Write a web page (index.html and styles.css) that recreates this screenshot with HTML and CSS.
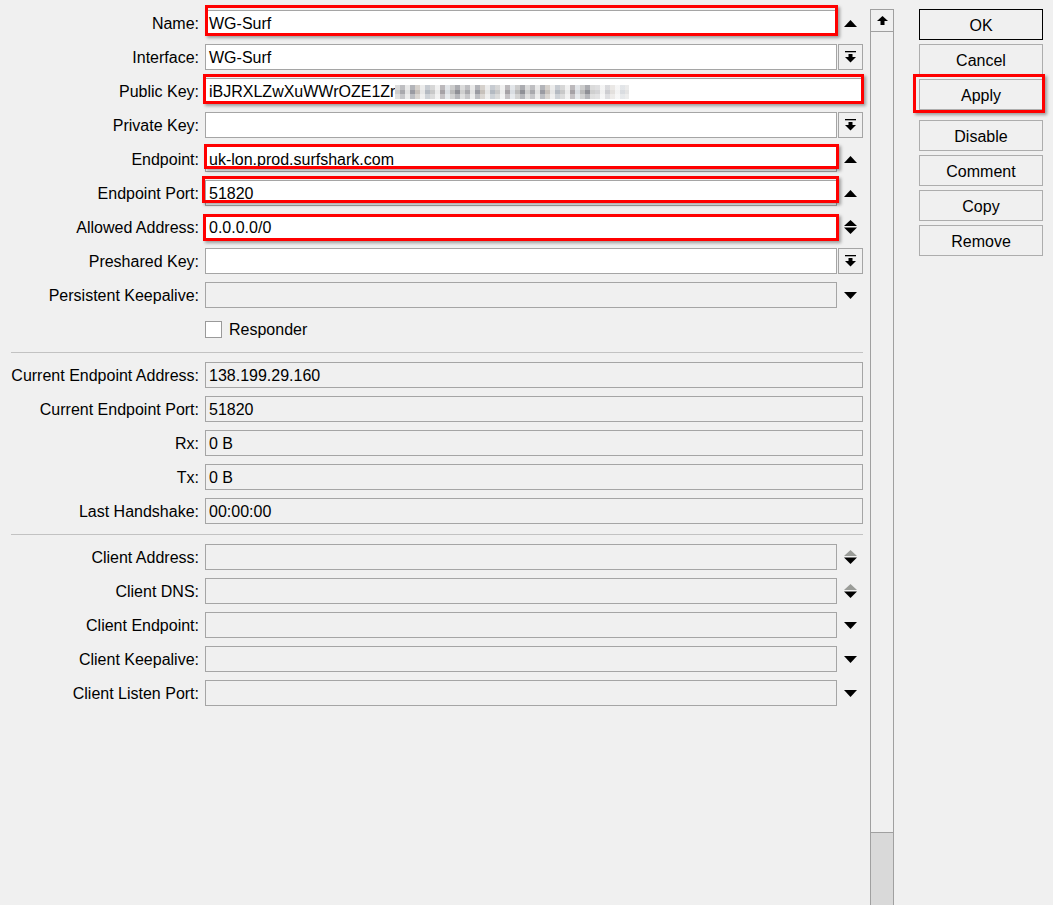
FILE: index.html
```html
<!DOCTYPE html>
<html>
<head>
<meta charset="utf-8">
<link rel="stylesheet" href="styles.css">
</head>
<body>
<div class="window">
  <div class="form">
    <div class="row">
      <div class="label">Name:</div>
      <div class="field">
        <div class="box white">WG-Surf</div>
        <div class="ctl"><svg width="13" height="7" viewBox="0 0 13 7"><polygon points="0,7 6.5,0 13,7" fill="#000"/></svg></div>
        <div class="mark mark-name"></div>
      </div>
    </div>
    <div class="row">
      <div class="label">Interface:</div>
      <div class="field">
        <div class="box white">WG-Surf</div>
        <div class="ddbtn"><svg width="11" height="12" viewBox="0 0 11 12"><rect x="0" y="0" width="11" height="1.3" fill="#000"/><rect x="3.5" y="3" width="4" height="3" fill="#000"/><polygon points="0,6 11,6 5.5,11.5" fill="#000"/></svg></div>
      </div>
    </div>
    <div class="row">
      <div class="label">Public Key:</div>
      <div class="field">
        <div class="box white">iBJRXLZwXuWWrOZE1Zr<span class="blur"></span></div>
        <div class="mark mark-pub"></div>
      </div>
    </div>
    <div class="row">
      <div class="label">Private Key:</div>
      <div class="field">
        <div class="box white"></div>
        <div class="ddbtn"><svg width="11" height="12" viewBox="0 0 11 12"><rect x="0" y="0" width="11" height="1.3" fill="#000"/><rect x="3.5" y="3" width="4" height="3" fill="#000"/><polygon points="0,6 11,6 5.5,11.5" fill="#000"/></svg></div>
      </div>
    </div>
    <div class="row">
      <div class="label">Endpoint:</div>
      <div class="field">
        <div class="box white">uk-lon.prod.surfshark.com</div>
        <div class="ctl"><svg width="13" height="7" viewBox="0 0 13 7"><polygon points="0,7 6.5,0 13,7" fill="#000"/></svg></div>
        <div class="mark mark-ep"></div>
      </div>
    </div>
    <div class="row">
      <div class="label">Endpoint Port:</div>
      <div class="field">
        <div class="box white">51820</div>
        <div class="ctl"><svg width="13" height="7" viewBox="0 0 13 7"><polygon points="0,7 6.5,0 13,7" fill="#000"/></svg></div>
        <div class="mark mark-port"></div>
      </div>
    </div>
    <div class="row">
      <div class="label">Allowed Address:</div>
      <div class="field">
        <div class="box white">0.0.0.0/0</div>
        <div class="ctl"><svg width="13" height="14" viewBox="0 0 13 14"><polygon points="0,6 6.5,0 13,6" fill="#000"/><polygon points="0,7.5 13,7.5 6.5,14" fill="#000"/></svg></div>
        <div class="mark mark-allow"></div>
      </div>
    </div>
    <div class="row">
      <div class="label">Preshared Key:</div>
      <div class="field">
        <div class="box white"></div>
        <div class="ddbtn"><svg width="11" height="12" viewBox="0 0 11 12"><rect x="0" y="0" width="11" height="1.3" fill="#000"/><rect x="3.5" y="3" width="4" height="3" fill="#000"/><polygon points="0,6 11,6 5.5,11.5" fill="#000"/></svg></div>
      </div>
    </div>
    <div class="row">
      <div class="label">Persistent Keepalive:</div>
      <div class="field">
        <div class="box"></div>
        <div class="ctl"><svg width="13" height="7" viewBox="0 0 13 7"><polygon points="0,0 13,0 6.5,7" fill="#000"/></svg></div>
      </div>
    </div>
    <div class="row">
      <div class="label"></div>
      <div class="field check">
        <span class="checkbox"></span><span class="check-text">Responder</span>
      </div>
    </div>
    <div class="sep"></div>
    <div class="row">
      <div class="label">Current Endpoint Address:</div>
      <div class="field"><div class="box">138.199.29.160</div></div>
    </div>
    <div class="row">
      <div class="label">Current Endpoint Port:</div>
      <div class="field"><div class="box">51820</div></div>
    </div>
    <div class="row">
      <div class="label">Rx:</div>
      <div class="field"><div class="box">0 B</div></div>
    </div>
    <div class="row">
      <div class="label">Tx:</div>
      <div class="field"><div class="box">0 B</div></div>
    </div>
    <div class="row">
      <div class="label">Last Handshake:</div>
      <div class="field"><div class="box">00:00:00</div></div>
    </div>
    <div class="sep"></div>
    <div class="row">
      <div class="label">Client Address:</div>
      <div class="field">
        <div class="box"></div>
        <div class="ctl"><svg width="13" height="14" viewBox="0 0 13 14"><polygon points="0,6 6.5,0 13,6" fill="#9a9c98"/><polygon points="0,7.5 13,7.5 6.5,14" fill="#000"/></svg></div>
      </div>
    </div>
    <div class="row">
      <div class="label">Client DNS:</div>
      <div class="field">
        <div class="box"></div>
        <div class="ctl"><svg width="13" height="14" viewBox="0 0 13 14"><polygon points="0,6 6.5,0 13,6" fill="#9a9c98"/><polygon points="0,7.5 13,7.5 6.5,14" fill="#000"/></svg></div>
      </div>
    </div>
    <div class="row">
      <div class="label">Client Endpoint:</div>
      <div class="field">
        <div class="box"></div>
        <div class="ctl"><svg width="13" height="7" viewBox="0 0 13 7"><polygon points="0,0 13,0 6.5,7" fill="#000"/></svg></div>
      </div>
    </div>
    <div class="row">
      <div class="label">Client Keepalive:</div>
      <div class="field">
        <div class="box"></div>
        <div class="ctl"><svg width="13" height="7" viewBox="0 0 13 7"><polygon points="0,0 13,0 6.5,7" fill="#000"/></svg></div>
      </div>
    </div>
    <div class="row">
      <div class="label">Client Listen Port:</div>
      <div class="field">
        <div class="box"></div>
        <div class="ctl"><svg width="13" height="7" viewBox="0 0 13 7"><polygon points="0,0 13,0 6.5,7" fill="#000"/></svg></div>
      </div>
    </div>
  </div>

  <div class="scroll">
    <div class="sc-up"><svg width="11" height="9" viewBox="0 0 11 9"><polygon points="0,5 5.5,0 11,5" fill="#000"/><rect x="3.5" y="5" width="4" height="4" fill="#000"/></svg></div>
    <div class="sc-thumb"></div>
    <div class="sc-track"></div>
  </div>

  <div class="side">
    <div class="btn default">OK</div>
    <div class="btn">Cancel</div>
    <div class="btn">Apply<div class="mark mark-apply"></div></div>
    <div class="btn gap">Disable</div>
    <div class="btn">Comment</div>
    <div class="btn">Copy</div>
    <div class="btn">Remove</div>
  </div>
</div>
</body>
</html>
```

FILE: styles.css
```css
html, body {
  margin: 0;
  padding: 0;
  background: #f0f0f0;
  font-family: "Liberation Sans", Arial, sans-serif;
  font-size: 16px;
  color: #000;
  overflow: hidden;
}

.window {
  display: flex;
  width: 1053px;
  height: 905px;
}

.form {
  flex: none;
  width: 870px;
  padding-top: 10px;
  display: flex;
  flex-direction: column;
  gap: 8px;
  box-sizing: border-box;
}

.row {
  display: flex;
  align-items: center;
  height: 26px;
}

.label {
  flex: none;
  width: 199px;
  margin-right: 6px;
  padding-top: 2px;
  text-align: right;
  white-space: nowrap;
}

.field {
  position: relative;
  flex: none;
  width: 658px;
  height: 26px;
  display: flex;
  gap: 1px;
}

.box {
  flex: 1;
  height: 26px;
  box-sizing: border-box;
  border: 1px solid #a5a5a5;
  background: #f0f0f0;
  padding: 1px 0 0 3px;
  line-height: 24px;
  white-space: nowrap;
  overflow: hidden;
}

.box.white {
  background: #fff;
}

.ctl {
  flex: none;
  width: 25px;
  height: 26px;
  display: flex;
  align-items: center;
  justify-content: center;
}

.ddbtn {
  flex: none;
  width: 25px;
  height: 26px;
  box-sizing: border-box;
  border: 1px solid #a5a5a5;
  background: #f0f0f0;
  display: flex;
  align-items: center;
  justify-content: center;
}

.ddbtn svg, .ctl svg, .sc-up svg {
  display: block;
}

.blur {
  display: inline-block;
  width: 234px;
  height: 14px;
  vertical-align: -2px;
  background:
    linear-gradient(180deg, rgba(255,255,255,0.25) 0 5px, rgba(255,255,255,0) 5px 9px, rgba(255,255,255,0.35) 9px),
    linear-gradient(90deg, rgba(255,255,255,0) 0 200px, rgba(255,255,255,0.5) 200px),
    repeating-linear-gradient(90deg, #cfcfcf 0 5px, #a9a9ad 5px 10px, #e2e2e2 10px 15px, #9a9ba2 15px 20px, #c7c1bb 20px 25px, #e6e6e6 25px 30px, #b4bac2 30px 35px, #c9c9c9 35px 40px, #ececec 40px 45px, #a6a2a6 45px 50px, #d9dde2 50px 55px, #bbbbbb 55px 60px, #8f9096 60px 65px);
}

.check {
  align-items: center;
  gap: 0;
}

.checkbox {
  display: inline-block;
  width: 17px;
  height: 17px;
  box-sizing: border-box;
  border: 1px solid #9a9a9a;
  background: #fff;
}

.check-text {
  margin-left: 7px;
  padding-top: 2px;
}

.sep {
  margin: 2px 0 1px 11px;
  width: 852px;
  height: 1px;
  background: #c2c2c2;
}

/* red annotation boxes drawn over the screenshot */
.mark {
  position: absolute;
  box-sizing: border-box;
  border: 3px solid #ff0000;
  box-shadow: 2px 2px 3px rgba(0, 0, 0, 0.35);
  pointer-events: none;
}

.mark-name { left: 0; top: -5px; width: 633px; height: 31px; }
.mark-pub { left: -2px; top: -4px; width: 661px; height: 30px; }
.mark-ep { left: -1px; top: -2px; width: 635px; height: 25px; }
.mark-port { left: -3px; top: -4px; width: 637px; height: 27px; }
.mark-allow { left: -2px; top: 0; width: 636px; height: 27px; }
.mark-apply { left: -7px; top: -6px; width: 132px; height: 39px; }

/* scrollbar */
.scroll {
  flex: none;
  width: 24px;
  margin-top: 9px;
  display: flex;
  flex-direction: column;
  box-sizing: border-box;
}

.sc-up {
  flex: none;
  height: 23px;
  box-sizing: border-box;
  border: 1px solid #a0a0a0;
  background: #f0f0f0;
  display: flex;
  align-items: center;
  justify-content: center;
}

.sc-thumb {
  flex: none;
  height: 801px;
  box-sizing: border-box;
  border: 1px solid #a0a0a0;
  border-top: none;
  background: #f0f0f0;
}

.sc-track {
  flex: 1;
  box-sizing: border-box;
  border-left: 1px solid #a0a0a0;
  border-right: 1px solid #a0a0a0;
  background: #d9d9d9;
}

/* buttons column */
.side {
  flex: none;
  width: 160px;
  box-sizing: border-box;
  padding: 9px 0 0 25px;
  border-right: 1px solid #a5a5a5;
  display: flex;
  flex-direction: column;
  gap: 4px;
}

.btn {
  position: relative;
  width: 124px;
  height: 31px;
  box-sizing: border-box;
  border: 1px solid #adadad;
  background: #f0f0f0;
  padding-top: 2px;
  display: flex;
  align-items: center;
  justify-content: center;
}

.btn.default {
  border-color: #000;
}

.btn.gap {
  margin-top: 6px;
}
```
